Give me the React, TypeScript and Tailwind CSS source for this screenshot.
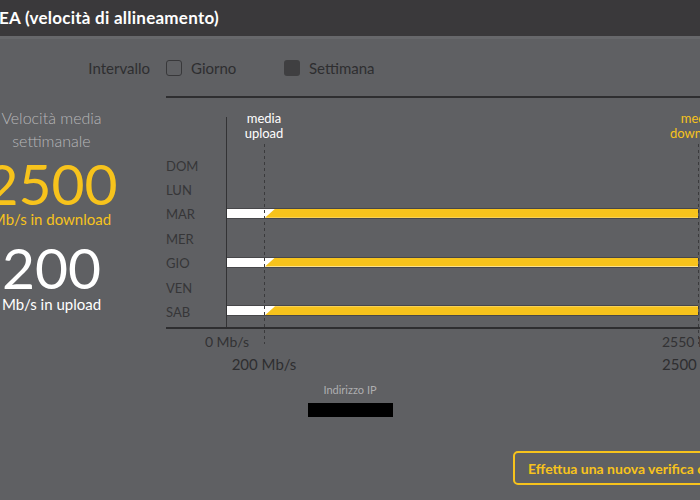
const days = [
  { label: "DOM", bar: false },
  { label: "LUN", bar: false },
  { label: "MAR", bar: true },
  { label: "MER", bar: false },
  { label: "GIO", bar: true },
  { label: "VEN", bar: false },
  { label: "SAB", bar: true },
];

function SpeedBar() {
  return (
    <div className="relative h-[11px] w-[471px] mb-[4px] bg-white border-y border-[#47474a]">
      {/* parte download con attacco obliquo */}
      <div className="absolute left-[38px] right-0 top-0 bottom-0 bg-[#f7c31c] [clip-path:polygon(10px_0,100%_0,100%_100%,0_100%)]" />
    </div>
  );
}

function Dashed({ left }: { left: string }) {
  return (
    <div
      className={`absolute top-[46px] h-[200px] w-px bg-[repeating-linear-gradient(to_bottom,#3a3a3c_0_3px,transparent_3px_6px)] ${left}`}
    />
  );
}

export default function App() {
  return (
    <div className="w-[700px] h-[500px] overflow-hidden bg-[#5f6063] flex flex-col font-['Lato','Liberation_Sans',sans-serif]">
      {/* header */}
      <div className="h-[36px] shrink-0 bg-[#3a393b] flex items-center">
        <h1 className="ml-[-1px] text-[17px] font-bold text-white whitespace-nowrap tracking-[0.25px]">
          EA (velocità di allineamento)
        </h1>
      </div>
      <div className="h-[3px] shrink-0 bg-[#67686b]" />

      {/* intervallo */}
      <div className="mt-[13px] h-[32px] flex items-center text-[15px] text-[#2e2e30]">
        <span className="w-[150px] text-right">Intervallo</span>
        <div className="ml-[16px] w-[118px] flex items-center">
          <span className="w-4 h-4 rounded-[3px] border-[1.5px] border-[#38383a]" />
          <span className="ml-[9px]">Giorno</span>
        </div>
        <div className="flex items-center">
          <span className="w-4 h-4 rounded-[3px] bg-[#3f3f41]" />
          <span className="ml-[9px]">Settimana</span>
        </div>
      </div>

      {/* contenuto principale */}
      <div className="mt-[12px] flex">
        {/* velocità media */}
        <div className="ml-[-27px] w-[157px] shrink-0 flex flex-col items-center text-center whitespace-nowrap">
          <p className="mt-[10px] text-[16px] leading-[23px] font-light text-[#b6b6b8]">
            Velocità media
            <br />
            settimanale
          </p>
          <p className="mt-[5px] text-[57px] leading-[52px] text-[#f7c31c]">2500</p>
          <p className="mt-[1px] text-[15px] leading-[18px] text-[#f7c31c]">Mb/s in download</p>
          <p className="mt-[13px] text-[57px] leading-[52px] text-white">200</p>
          <p className="mt-[2px] text-[15px] leading-[18px] text-white">Mb/s in upload</p>
        </div>

        {/* grafico */}
        <div className="relative ml-[36px] w-[560px] shrink-0 border-t-2 border-[#2e2e30]">
          <div className="mt-[19px] h-[212px] flex border-b-2 border-[#2e2e30]">
            <div className="w-[60px] flex flex-col justify-end pb-[2px] text-[13px] text-[#363638]">
              {days.map((d) => (
                <div key={d.label} className="h-[24.4px] flex items-center">
                  {d.label}
                </div>
              ))}
            </div>
            <div className="flex-1 border-l border-[#333335] flex flex-col justify-end pb-[2px]">
              {days.map((d) => (
                <div key={d.label} className="h-[24.4px] flex items-center">
                  {d.bar && <SpeedBar />}
                </div>
              ))}
            </div>
          </div>
          <div className="h-[45px]" />

          {/* linee medie */}
          <Dashed left="left-[98px]" />
          <Dashed left="left-[532px]" />
          <div className="absolute top-[13px] left-[58px] w-[80px] text-center text-[13px] leading-[15px] text-white">
            media
            <br />
            upload
          </div>
          <div className="absolute top-[13px] left-[492px] w-[80px] text-center text-[13px] leading-[15px] text-[#f7c31c]">
            media
            <br />
            download
          </div>

          {/* etichette asse */}
          <span className="absolute top-[233px] left-[21px] w-[80px] text-center text-[14px] text-[#323234]">0 Mb/s</span>
          <span className="absolute top-[255px] left-[58px] w-[80px] text-center text-[15px] text-[#2e2e30]">200 Mb/s</span>
          <span className="absolute top-[233px] left-[496px] text-[14px] text-[#323234] whitespace-nowrap">2550 Mb/s</span>
          <span className="absolute top-[255px] left-[496px] text-[15px] text-[#2e2e30] whitespace-nowrap">2500 Mb/s</span>
        </div>
      </div>

      {/* indirizzo IP */}
      <div className="mt-[9px] flex flex-col items-center">
        <span className="text-[11px] leading-[14px] text-[#aeaeb0]">Indirizzo IP</span>
        <div className="mt-[6px] w-[85px] h-[14px] bg-black" />
      </div>

      <button className="mt-[34px] ml-[513px] self-start h-[34px] shrink-0 px-[13px] border-2 border-[#f7c31c] rounded-[5px] text-[14px] font-bold text-[#f7c31c] whitespace-nowrap">
        Effettua una nuova verifica ora
      </button>
    </div>
  );
}
